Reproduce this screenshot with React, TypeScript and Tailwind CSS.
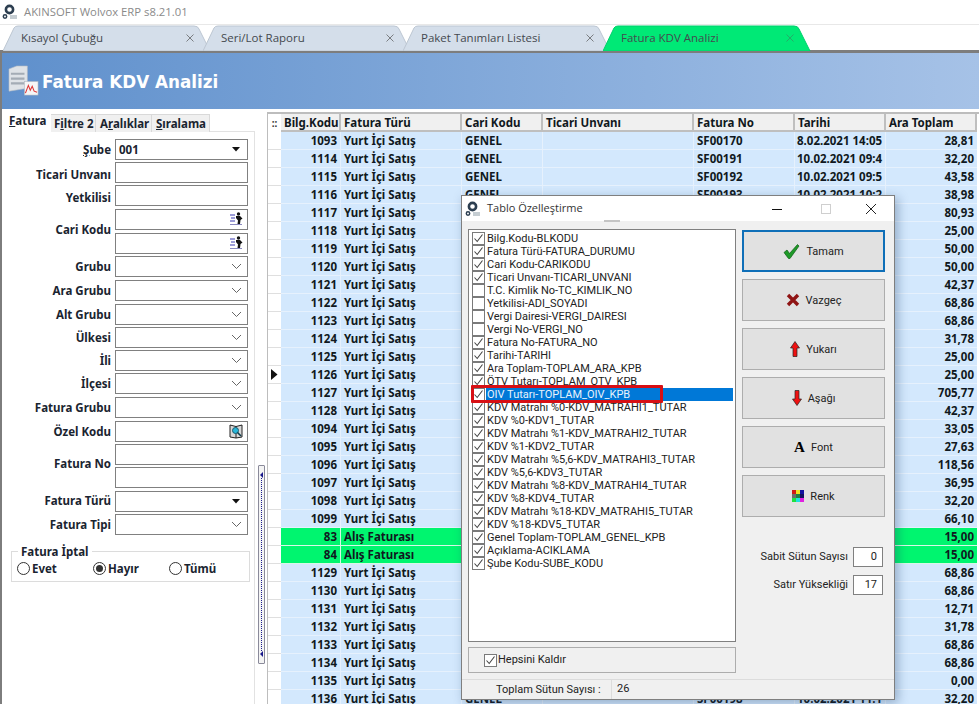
import React from "react";

const rows = [
  ["1093", "Yurt İçi Satış", "GENEL", "SF00170", "8.02.2021 14:05", "28,81"],
  ["1114", "Yurt İçi Satış", "GENEL", "SF00191", "10.02.2021 09:4", "32,20"],
  ["1115", "Yurt İçi Satış", "GENEL", "SF00192", "10.02.2021 09:5", "43,58"],
  ["1116", "Yurt İçi Satış", "GENEL", "SF00193", "10.02.2021 10:2", "38,98"],
  ["1117", "Yurt İçi Satış", "", "", "", "80,93"],
  ["1118", "Yurt İçi Satış", "", "", "", "25,00"],
  ["1119", "Yurt İçi Satış", "", "", "", "50,00"],
  ["1120", "Yurt İçi Satış", "", "", "", "50,00"],
  ["1121", "Yurt İçi Satış", "", "", "", "42,37"],
  ["1122", "Yurt İçi Satış", "", "", "", "68,86"],
  ["1123", "Yurt İçi Satış", "", "", "", "68,86"],
  ["1124", "Yurt İçi Satış", "", "", "", "31,78"],
  ["1125", "Yurt İçi Satış", "", "", "", "25,00"],
  ["1126", "Yurt İçi Satış", "", "", "", "25,00"],
  ["1127", "Yurt İçi Satış", "", "", "", "705,77"],
  ["1128", "Yurt İçi Satış", "", "", "", "42,37"],
  ["1094", "Yurt İçi Satış", "", "", "", "33,05"],
  ["1095", "Yurt İçi Satış", "", "", "", "27,63"],
  ["1096", "Yurt İçi Satış", "", "", "", "118,56"],
  ["1097", "Yurt İçi Satış", "", "", "", "36,95"],
  ["1098", "Yurt İçi Satış", "", "", "", "32,20"],
  ["1099", "Yurt İçi Satış", "", "", "", "66,10"],
  ["83", "Alış Faturası", "", "", "", "15,00"],
  ["84", "Alış Faturası", "", "", "", "15,00"],
  ["1129", "Yurt İçi Satış", "", "", "", "68,86"],
  ["1130", "Yurt İçi Satış", "", "", "", "68,86"],
  ["1131", "Yurt İçi Satış", "", "", "", "12,71"],
  ["1132", "Yurt İçi Satış", "", "", "", "31,78"],
  ["1133", "Yurt İçi Satış", "", "", "", "68,86"],
  ["1134", "Yurt İçi Satış", "", "", "", "68,86"],
  ["1135", "Yurt İçi Satış", "", "", "", "0,00"],
  ["1136", "Yurt İçi Satış", "GENEL", "SF00198", "10.02.2021 11:1", "32,20"],
];

const columns = [
  ["Bilg.Kodu", "w-[60px]"],
  ["Fatura Türü", "w-[121px]"],
  ["Cari Kodu", "w-[81px]"],
  ["Ticari Unvanı", "w-[151px]"],
  ["Fatura No", "w-[101px]"],
  ["Tarihi", "w-[91px]"],
  ["Ara Toplam", "w-[91px]"],
];

const fields: [string, boolean][] = [
  ["Bilg.Kodu-BLKODU", true],
  ["Fatura Türü-FATURA_DURUMU", true],
  ["Cari Kodu-CARIKODU", true],
  ["Ticari Unvanı-TICARI_UNVANI", true],
  ["T.C. Kimlik No-TC_KIMLIK_NO", false],
  ["Yetkilisi-ADI_SOYADI", false],
  ["Vergi Dairesi-VERGI_DAIRESI", false],
  ["Vergi No-VERGI_NO", false],
  ["Fatura No-FATURA_NO", true],
  ["Tarihi-TARIHI", true],
  ["Ara Toplam-TOPLAM_ARA_KPB", true],
  ["ÖTV Tutarı-TOPLAM_OTV_KPB", true],
  ["OIV Tutarı-TOPLAM_OIV_KPB", true],
  ["KDV Matrahı %0-KDV_MATRAHI1_TUTAR", true],
  ["KDV %0-KDV1_TUTAR", true],
  ["KDV Matrahı %1-KDV_MATRAHI2_TUTAR", true],
  ["KDV %1-KDV2_TUTAR", true],
  ["KDV Matrahı %5,6-KDV_MATRAHI3_TUTAR", true],
  ["KDV %5,6-KDV3_TUTAR", true],
  ["KDV Matrahı %8-KDV_MATRAHI4_TUTAR", true],
  ["KDV %8-KDV4_TUTAR", true],
  ["KDV Matrahı %18-KDV_MATRAHI5_TUTAR", true],
  ["KDV %18-KDV5_TUTAR", true],
  ["Genel Toplam-TOPLAM_GENEL_KPB", true],
  ["Açıklama-ACIKLAMA", true],
  ["Şube Kodu-SUBE_KODU", true],
];

function Logo() {
  return (
    <svg width="16" height="16" viewBox="0 0 16 16" className="shrink-0">
      <circle cx="7.5" cy="5.5" r="3.6" fill="none" stroke="#2c3e50" strokeWidth="2.6" />
      <circle cx="3" cy="12.5" r="1.7" fill="none" stroke="#2c3e50" strokeWidth="1.5" />
      <rect x="8" y="11" width="7" height="4" fill="#c5cdd2" />
    </svg>
  );
}

function Tab({ label, active, w }: { label: string; active?: boolean; w: number }) {
  return (
    <div className="relative h-[26px] shrink-0 -ml-[9px] first:ml-[3px]" style={{ width: w }}>
      <svg width={w} height="26" className="absolute inset-0">
        <path
          d={`M0 26 L11 3 Q12 1 15 1 L${w - 18} 1 Q${w - 14} 1 ${w - 13} 4 L${w - 2} 26 Z`}
          fill={active ? "#00e976" : "#d4deea"}
          stroke={active ? "#00d06c" : "#bcc6d2"}
        />
      </svg>
      <span className="absolute left-[18px] top-[4px] text-[11.5px] text-[#44494f] font-['Open_Sans',sans-serif]">
        {label}
      </span>
      <span className={`absolute left-[182px] top-[8px] ${active ? "opacity-40" : "opacity-70"}`}>
        <svg width="10" height="10" viewBox="0 0 10 10">
          <path d="M1.5 1.5 L8.5 8.5 M8.5 1.5 L1.5 8.5" stroke="#555" strokeWidth="1" />
        </svg>
      </span>
    </div>
  );
}

function Chevron() {
  return (
    <svg width="11" height="7" viewBox="0 0 11 7" className="mr-[5px]">
      <path d="M1 1 L5.5 5.5 L10 1" fill="none" stroke="#666" strokeWidth="1" />
    </svg>
  );
}

function Caret() {
  return (
    <svg width="9" height="5" viewBox="0 0 9 5" className="mr-[6px]">
      <path d="M0 0 H8 L4 4.5 Z" fill="#111" />
    </svg>
  );
}

function Runner() {
  return (
    <svg width="15" height="14" viewBox="0 0 15 14" className="mr-[3px]">
      <path d="M1 3 H6 M2 6 H6 M1 9 H6" stroke="#3a3ab0" strokeWidth="1" />
      <path d="M1 12.5 H13" stroke="#8a8ac0" strokeWidth="1" />
      <circle cx="9.5" cy="2" r="1.7" fill="#111" />
      <path d="M7 4 H11 L13.5 6.5 L11.5 8 L11 12 H8.5 L9 8.5 L7 6 Z" fill="#111" />
    </svg>
  );
}

function BookSearch() {
  return (
    <svg width="15" height="15" viewBox="0 0 15 15" className="mr-[3px]">
      <path d="M1 1 L7 2.5 L13 1 V13 L7 14 L1 13 Z" fill="#d8d8d8" stroke="#222" strokeWidth="1" />
      <path d="M7 2.5 V14" stroke="#222" strokeWidth="1" />
      <circle cx="6.5" cy="6.5" r="3" fill="#29b6d8" stroke="#1c5b70" strokeWidth="1" />
      <path d="M8.5 8.5 L12 12" stroke="#0d3b4a" strokeWidth="1.6" />
    </svg>
  );
}

function Input({ children, className = "" }: { children?: React.ReactNode; className?: string }) {
  return (
    <div className={`h-[21px] w-[133px] border border-[#808080] bg-white flex items-center justify-end ${className}`}>
      {children}
    </div>
  );
}

function FormRow({
  label,
  mt,
  children,
}: {
  label: React.ReactNode;
  mt: string;
  children: React.ReactNode;
}) {
  return (
    <div className={`flex items-center ${mt}`}>
      <div className="w-[108px] text-right text-[#1a2430] mr-[4px] whitespace-nowrap pt-[1px]">{label}</div>
      <div className="flex flex-col gap-[3px]">{children}</div>
    </div>
  );
}

function Radio({ label, checked, w }: { label: string; checked?: boolean; w: string }) {
  return (
    <div className={`flex items-center gap-[2px] ${w}`}>
      <span className="w-[13px] h-[13px] rounded-full border border-[#333] bg-white flex items-center justify-center">
        {checked && <span className="w-[7px] h-[7px] rounded-full bg-[#333]" />}
      </span>
      <span>{label}</span>
    </div>
  );
}

function Check({ on }: { on: boolean }) {
  return (
    <span className="w-[13px] h-[13px] border border-[#7a7a7a] bg-white flex items-center justify-center shrink-0">
      {on && (
        <svg width="11" height="11" viewBox="0 0 11 11">
          <path d="M1.5 5.5 L4.2 8.5 L9.5 1.5" fill="none" stroke="#444" strokeWidth="1.1" />
        </svg>
      )}
    </span>
  );
}

function DialogButton({
  label,
  icon,
  active,
  mt,
}: {
  label: string;
  icon: React.ReactNode;
  active?: boolean;
  mt: string;
}) {
  return (
    <div
      className={`h-[42px] w-[143px] bg-[#e1e1e1] flex items-center justify-center gap-[6px] ${mt} ${
        active ? "border-2 border-[#0f6fb8]" : "border border-[#adadad]"
      }`}
    >
      {icon}
      <span className="pt-[3px]">{label}</span>
    </div>
  );
}

function Grid() {
  return (
    <div className="flex-1 border-l border-t-2 border-[#bdbdbd] ml-[2px] mt-[3px] overflow-hidden font-['Noto_Sans',sans-serif] font-bold text-[11.5px] text-[#101820] min-w-0">
      <div className="flex h-[18px] bg-white">
        <div className="w-[13px] flex items-center justify-center text-[#333] text-[10px]">::</div>
        {columns.map(([name, w]) => (
          <div
            key={name}
            className={`${w} bg-[#f0f0f0] border-r-2 border-b-2 border-[#bfbfbf] pl-[3px] pt-[1px] flex items-center whitespace-nowrap overflow-hidden`}
          >
            {name}
          </div>
        ))}
      </div>
      {rows.map((r, i) => {
        const green = r[0] === "83" || r[0] === "84";
        const bg = green ? "bg-[#00f56f]" : "bg-[#d3e8fd]";
        const line = green ? "border-[#d8f8e6]" : "border-[#e6f1fd]";
        return (
          <div key={i} className="flex h-[18px]">
            <div className="w-[13px] border-b border-[#dfdfdf] bg-white flex items-center justify-center">
              {r[0] === "1126" && (
                <svg width="7" height="11" viewBox="0 0 7 11">
                  <path d="M0 0 L6.5 5.5 L0 11 Z" fill="#111" />
                </svg>
              )}
            </div>
            <div className={`w-[60px] ${bg} border-r border-b ${line} text-right pr-[3px] leading-[18px]`}>{r[0]}</div>
            <div className={`w-[121px] ${bg} border-r border-b ${line} pl-[3px] leading-[18px]`}>{r[1]}</div>
            <div className={`w-[81px] ${bg} border-r border-b ${line} pl-[3px] leading-[18px]`}>{r[2]}</div>
            <div className={`w-[151px] ${bg} border-r border-b ${line}`} />
            <div className={`w-[101px] ${bg} border-r border-b ${line} pl-[3px] leading-[18px]`}>{r[3]}</div>
            <div className={`w-[91px] ${bg} border-r border-b ${line} pl-[2px] leading-[18px] whitespace-nowrap overflow-hidden`}>
              {r[4]}
            </div>
            <div className={`w-[91px] ${bg} border-b ${line} text-right pr-[3px] leading-[18px]`}>{r[5]}</div>
          </div>
        );
      })}
    </div>
  );
}

function LeftPanel() {
  return (
    <div className="w-[253px] shrink-0 pl-[1px] pt-[3px] font-['Noto_Sans',sans-serif] font-bold text-[11.5px] text-[#1a2430]">
      <div className="flex h-[20px] items-end whitespace-nowrap">
        <div className="w-[48px] h-[20px] bg-white pl-[6px] leading-[18px]">
          <u>F</u>atura
        </div>
        <div className="w-[45px] h-[18px] bg-[#f0f0f0] border-r border-t border-[#d9d9d9] pl-[3px] leading-[18px]">
          F<u>i</u>ltre 2
        </div>
        <div className="w-[56px] h-[18px] bg-[#f0f0f0] border-r border-t border-[#d9d9d9] pl-[4px] leading-[18px]">
          A<u>r</u>alıklar
        </div>
        <div className="w-[58px] h-[18px] bg-[#f0f0f0] border-r border-t border-[#d9d9d9] pl-[4px] leading-[18px]">
          <u>S</u>ıralama
        </div>
        <div className="flex-1 h-full border-b border-[#e2e2e2]" />
      </div>
      <div className="h-[575px] border-r border-[#e2e2e2] pt-[7px]">
        <FormRow label={<><u>Ş</u>ube</>} mt="">
          <Input className="justify-between!">
            <span className="pl-[3px]">001</span>
            <Caret />
          </Input>
        </FormRow>
        <FormRow label={<span className="block pt-[3px]">Ticari Unvanı</span>} mt="mt-[2px]"><Input /></FormRow>
        <FormRow label={<span className="block pt-[3px]">Yetkilisi</span>} mt="mt-[2px]"><Input /></FormRow>
        <FormRow label={<span className="block pb-[3px]">Cari Kodu</span>} mt="mt-[2px]">
          <Input><Runner /></Input>
          <Input><Runner /></Input>
        </FormRow>
        <FormRow label="Grubu" mt="mt-[2px]"><Input><Chevron /></Input></FormRow>
        <FormRow label="Ara Grubu" mt="mt-[3px]"><Input><Chevron /></Input></FormRow>
        <FormRow label="Alt Grubu" mt="mt-[3px]"><Input><Chevron /></Input></FormRow>
        <FormRow label="Ülkesi" mt="mt-[2px]"><Input><Chevron /></Input></FormRow>
        <FormRow label="İli" mt="mt-[2px]"><Input><Chevron /></Input></FormRow>
        <FormRow label="İlçesi" mt="mt-[2px]"><Input><Chevron /></Input></FormRow>
        <FormRow label="Fatura Grubu" mt="mt-[3px]"><Input><Chevron /></Input></FormRow>
        <FormRow label="Özel Kodu" mt="mt-[3px]"><Input><BookSearch /></Input></FormRow>
        <FormRow label={<span className="block pb-[4px]">Fatura No</span>} mt="mt-[2px]">
          <Input />
          <Input className="-mt-[1px]" />
        </FormRow>
        <FormRow label={<span className="block pb-[3px]">Fatura Türü</span>} mt="mt-[3px]"><Input><Caret /></Input></FormRow>
        <FormRow label="Fatura Tipi" mt="mt-[2px]"><Input><Chevron /></Input></FormRow>
        <div className="relative ml-[8px] mt-[16px] w-[239px] h-[31px] border border-[#dcdcdc] flex items-center pl-[5px] pt-[5px]">
          <span className="absolute left-[6px] -top-[7px] bg-white px-[3px] leading-[13px]">Fatura İptal</span>
          <Radio label="Evet" w="w-[76px]" />
          <Radio label="Hayır" checked w="w-[76px]" />
          <Radio label="Tümü" w="w-[76px]" />
        </div>
      </div>
    </div>
  );
}

function Splitter() {
  return (
    <div className="w-[10px] shrink-0 relative">
      <div className="absolute left-[3px] top-[356px] w-[7px] h-[199px] border border-[#8a8a9a] bg-[#f4f4f4] rounded-[1px] flex flex-col items-center justify-between py-[6px]">
        <span className="w-0 h-0 border-y-[3px] border-y-transparent border-r-[3px] border-r-[#1a1a8c]" />
        <span className="absolute left-[2px] top-[12px] bottom-[12px] border-l border-dotted border-[#1a1a8c]" />
        <span className="w-0 h-0 border-y-[3px] border-y-transparent border-r-[3px] border-r-[#1a1a8c]" />
      </div>
    </div>
  );
}

function TableDialog() {
  return (
    <div className="absolute left-[461px] top-[195px] w-[434px] h-[505px] bg-[#f0f0f0] border border-[#7f7f7f] shadow-[3px_3px_10px_rgba(30,60,100,0.35)] flex flex-col font-['Roboto',sans-serif] text-[11px] text-[#222]">
      <div className="h-[25px] bg-white flex items-center pl-[3px] shrink-0">
        <Logo />
        <span className="ml-[6px] text-[11px] font-['Open_Sans',sans-serif] text-[#333]">Tablo Özelleştirme</span>
        <div className="ml-auto flex items-center">
          <svg width="12" height="12" viewBox="0 0 12 12" className="mr-[37px]">
            <path d="M1 6.5 H11" stroke="#111" strokeWidth="1" />
          </svg>
          <svg width="12" height="12" viewBox="0 0 12 12" className="mr-[33px]">
            <rect x="1.5" y="1.5" width="9" height="9" fill="none" stroke="#cfcfcf" />
          </svg>
          <svg width="12" height="12" viewBox="0 0 12 12" className="mr-[17px]">
            <path d="M1 1 L11 11 M11 1 L1 11" stroke="#222" strokeWidth="1" />
          </svg>
        </div>
      </div>
      <div className="flex-1 flex pl-[6px] pt-[8px] relative">
        <span className="absolute left-[142px] -top-[1px] w-[16px] h-[2px] bg-[#c4c4c4]" />
        <div className="w-[268px] shrink-0">
          <div className="relative h-[413px] border border-[#808080] bg-white pt-[2px] pl-[3px] pr-[2px]">
            {fields.map(([name, on]) => {
              const selected = name.startsWith("OIV");
              return (
                <div key={name} className="flex items-center h-[13px] gap-[1px] whitespace-nowrap">
                  <Check on={on} />
                  <span className={`leading-[13px] pl-[1px] flex-1 ${selected ? "bg-[#0078d7] text-[#e9f3fb]" : ""}`}>
                    {name}
                  </span>
                </div>
              );
            })}
            <span className="absolute left-[2px] top-[155px] w-[192px] h-[18px] border-[3px] border-[#d70f14] rounded-[1px]" />
          </div>
          <div className="mt-[5px] h-[26px] border border-[#adadad] flex items-center pl-[15px] gap-[1px]">
            <Check on />
            <span>Hepsini Kaldır</span>
          </div>
        </div>
        <div className="ml-[6px] w-[144px]">
          <DialogButton
            mt="mt-[1px]"
            active
            label="Tamam"
            icon={
              <svg width="17" height="17" viewBox="0 0 17 16">
                <path d="M1 9 L4 6.5 L6.5 10 L14.5 1 L16 2.5 L7 15 L5.5 15 Z" fill="#1e9a28" stroke="#0d5b14" strokeWidth="0.7" />
              </svg>
            }
          />
          <DialogButton
            mt="mt-[7px]"
            label="Vazgeç"
            icon={
              <svg width="14" height="14" viewBox="0 0 14 14">
                <path d="M2 2 L12 12 M12 2 L2 12" stroke="#8f1414" strokeWidth="3.4" />
              </svg>
            }
          />
          <DialogButton
            mt="mt-[7px]"
            label="Yukarı"
            icon={
              <svg width="10" height="16" viewBox="0 0 10 16">
                <path d="M5 0.5 L9.5 7 H7 V15.5 H3 V7 H0.5 Z" fill="#ee1111" stroke="#222" strokeWidth="0.7" />
              </svg>
            }
          />
          <DialogButton
            mt="mt-[7px]"
            label="Aşağı"
            icon={
              <svg width="10" height="16" viewBox="0 0 10 16">
                <path d="M5 15.5 L9.5 9 H7 V0.5 H3 V9 H0.5 Z" fill="#ee1111" stroke="#222" strokeWidth="0.7" />
              </svg>
            }
          />
          <DialogButton
            mt="mt-[7px]"
            label="Font"
            icon={<span className="font-['Liberation_Serif',serif] font-bold text-[15px] leading-none text-black">A</span>}
          />
          <DialogButton
            mt="mt-[7px]"
            label="Renk"
            icon={
              <span className="grid grid-cols-3 w-[12px] h-[12px]">
                <i className="bg-[#d01818]" />
                <i className="bg-[#f0e020]" />
                <i className="bg-[#1010a0]" />
                <i className="bg-[#6b6b6b]" />
                <i className="bg-[#208040]" />
                <i className="bg-[#101060]" />
                <i className="bg-[#20e040]" />
                <i className="bg-[#20e0e0]" />
                <i className="bg-[#e020e0]" />
              </span>
            }
          />
          <div className="mt-[30px] flex items-center justify-end gap-[5px] pr-[3px]">
            <span>Sabit Sütun Sayısı</span>
            <span className="w-[30px] h-[20px] bg-white border border-[#808080] text-right pr-[5px] leading-[18px]">0</span>
          </div>
          <div className="mt-[8px] flex items-center justify-end gap-[5px] pr-[3px]">
            <span>Satır Yüksekliği</span>
            <span className="w-[30px] h-[20px] bg-white border border-[#808080] text-right pr-[5px] leading-[18px]">17</span>
          </div>
        </div>
      </div>
      <div className="h-[20px] border-t border-[#dcdcdc] flex items-center shrink-0">
        <span className="pl-[34px] w-[150px] border-r border-[#dcdcdc] h-full leading-[20px] whitespace-nowrap">Toplam Sütun Sayısı :</span>
        <span className="pl-[5px]">26</span>
      </div>
    </div>
  );
}

export default function App() {
  return (
    <div className="relative w-[979px] h-[704px] overflow-hidden bg-white">
      <div className="h-[24px] flex items-center pl-[2px] gap-[6px]">
        <Logo />
        <span className="text-[11.3px] text-[#8a8a8a] font-['Open_Sans',sans-serif]">AKINSOFT Wolvox ERP s8.21.01</span>
      </div>
      <div className="h-[26px] flex border-t border-[#e8e8e8]">
        <Tab label="Kısayol Çubuğu" w={209} />
        <Tab label="Seri/Lot Raporu" w={209} />
        <Tab label="Paket Tanımları Listesi" w={209} />
        <Tab label="Fatura KDV Analizi" active w={209} />
      </div>
      <div className="h-[654px] border-t-[3px] border-l-[2px] border-[#7d7d7d]">
        <div className="h-[56px] bg-gradient-to-r from-[#5f90cc] to-[#a6c2e7] flex items-center pl-[6px]">
          <svg width="31" height="33" viewBox="0 0 32 34">
            <path d="M1 4 L9 1 H20 V24 L1 27 Z" fill="#dfe3e7" stroke="#b4bcc4" strokeWidth="0.6" />
            <path d="M3 9 H17 M3 14 H17 M3 19 H17" stroke="#a4acb5" strokeWidth="2.2" />
            <rect x="17" y="17" width="14" height="14" fill="#f6f6f6" stroke="#b0b8c0" strokeWidth="0.6" />
            <path d="M18 29 L21 21 L23 26 L25 22 L27 27 L30 28" fill="none" stroke="#d33" strokeWidth="1.1" />
          </svg>
          <span className="ml-[3px] pt-[3px] text-white font-bold text-[16.8px] font-['DejaVu_Sans',sans-serif]">Fatura KDV Analizi</span>
        </div>
        <div className="flex h-[595px] overflow-hidden">
          <LeftPanel />
          <Splitter />
          <Grid />
        </div>
      </div>
      <TableDialog />
    </div>
  );
}
